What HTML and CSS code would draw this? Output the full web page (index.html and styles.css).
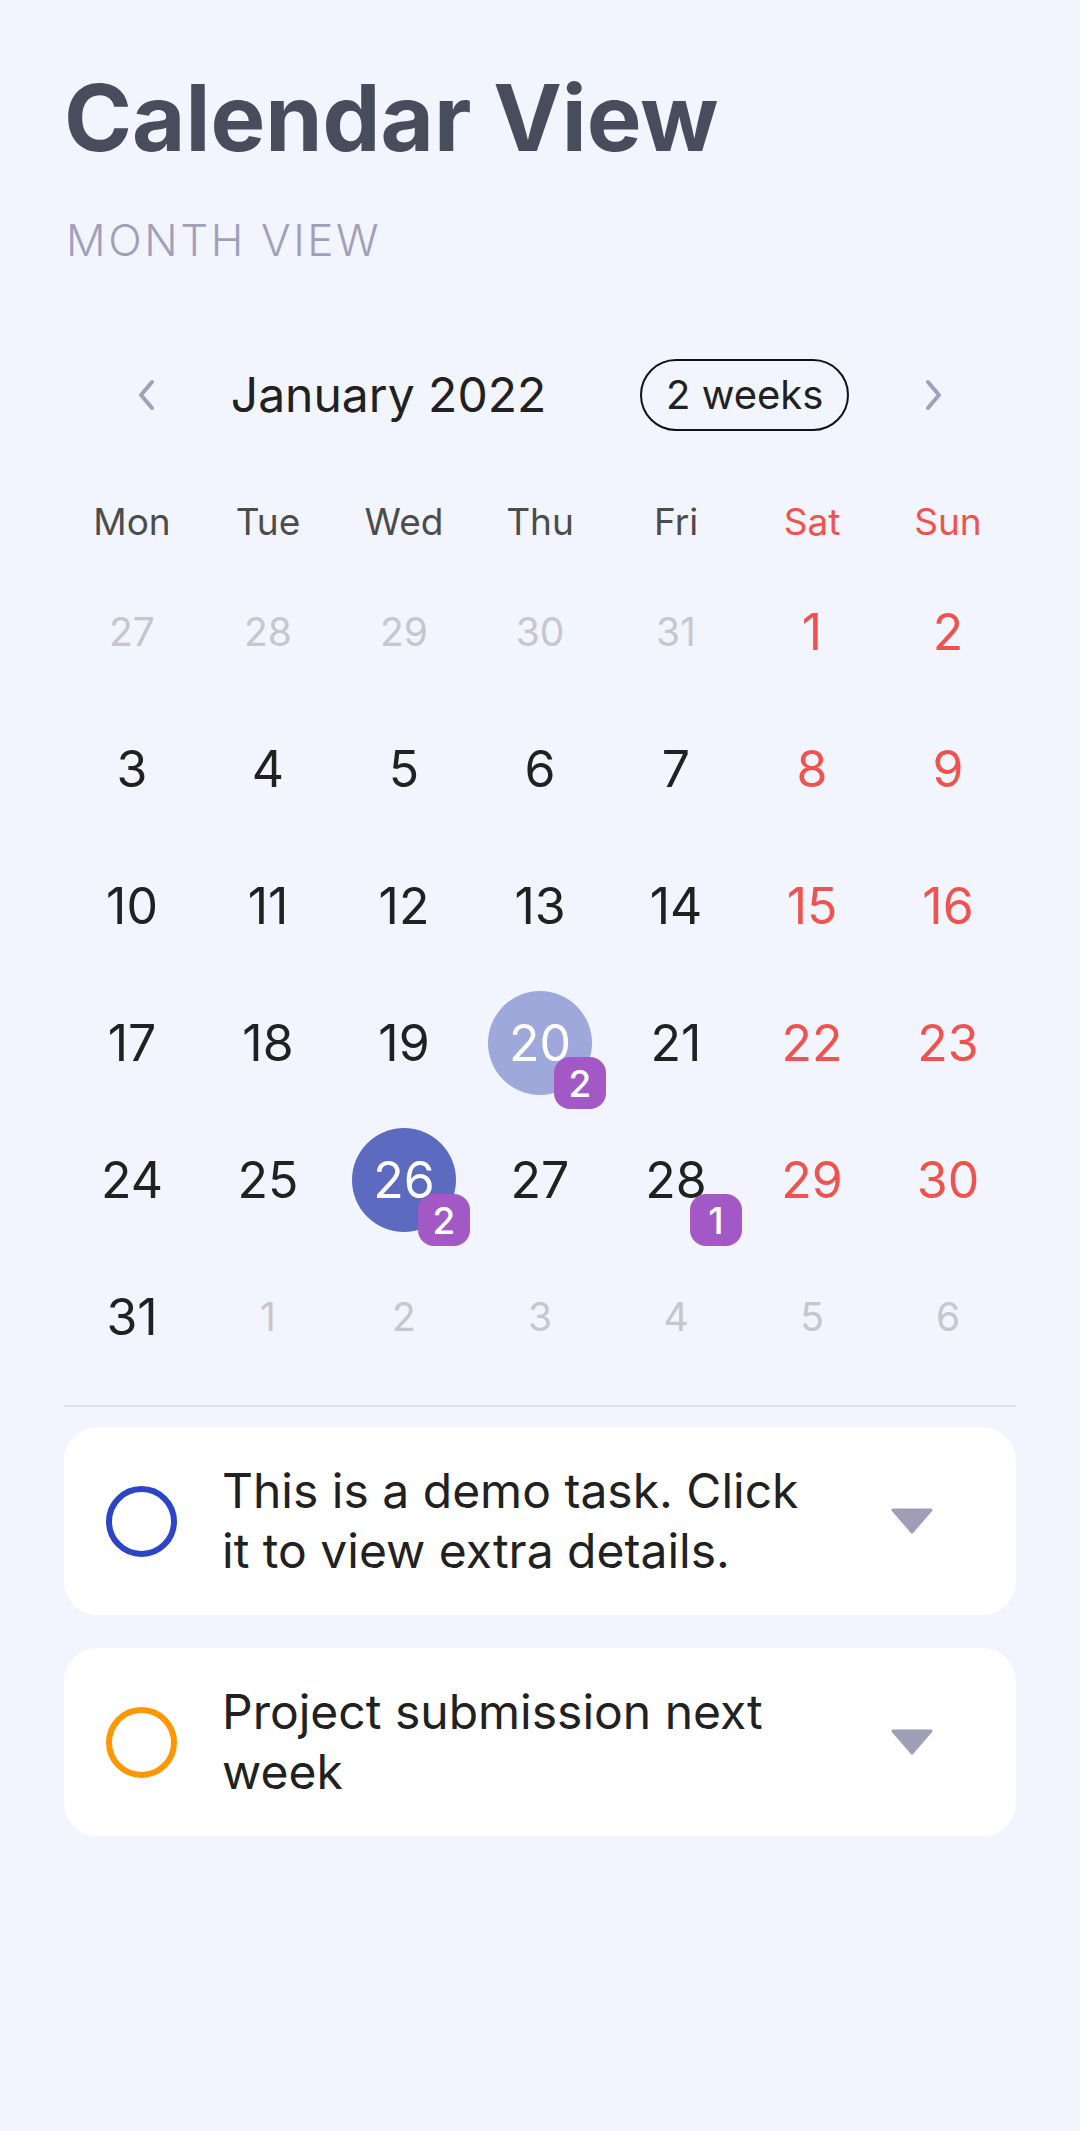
FILE: index.html
```html
<!DOCTYPE html>
<html lang="en">
<head>
<meta charset="utf-8">
<title>Calendar View</title>
<link rel="stylesheet" href="styles.css">
</head>
<body>
<main class="page">
  <h1 class="title">Calendar View</h1>
  <p class="subtitle">MONTH VIEW</p>

  <section class="calendar">
    <div class="cal-nav">
      <button class="chev" aria-label="Previous month">
        <svg width="24" height="34" viewBox="0 0 24 34"><path d="M18 4 L7 17 L18 30" fill="none" stroke="#a19fba" stroke-width="4" stroke-linecap="round" stroke-linejoin="round"/></svg>
      </button>
      <div class="cal-center">
        <span class="month">January 2022</span>
        <span class="pill">2 weeks</span>
      </div>
      <button class="chev" aria-label="Next month">
        <svg width="24" height="34" viewBox="0 0 24 34"><path d="M6 4 L17 17 L6 30" fill="none" stroke="#a19fba" stroke-width="4" stroke-linecap="round" stroke-linejoin="round"/></svg>
      </button>
    </div>

    <div class="weekdays">
      <span>Mon</span><span>Tue</span><span>Wed</span><span>Thu</span><span>Fri</span><span class="wkend">Sat</span><span class="wkend">Sun</span>
    </div>

    <div class="days">
      <div class="cell other">27</div>
      <div class="cell other">28</div>
      <div class="cell other">29</div>
      <div class="cell other">30</div>
      <div class="cell other">31</div>
      <div class="cell wkend">1</div>
      <div class="cell wkend">2</div>

      <div class="cell">3</div>
      <div class="cell">4</div>
      <div class="cell">5</div>
      <div class="cell">6</div>
      <div class="cell">7</div>
      <div class="cell wkend">8</div>
      <div class="cell wkend">9</div>

      <div class="cell">10</div>
      <div class="cell">11</div>
      <div class="cell">12</div>
      <div class="cell">13</div>
      <div class="cell">14</div>
      <div class="cell wkend">15</div>
      <div class="cell wkend">16</div>

      <div class="cell">17</div>
      <div class="cell">18</div>
      <div class="cell">19</div>
      <div class="cell"><span class="dot dot-light">20</span><span class="badge">2</span></div>
      <div class="cell">21</div>
      <div class="cell wkend">22</div>
      <div class="cell wkend">23</div>

      <div class="cell">24</div>
      <div class="cell">25</div>
      <div class="cell"><span class="dot dot-today">26</span><span class="badge">2</span></div>
      <div class="cell">27</div>
      <div class="cell">28<span class="badge">1</span></div>
      <div class="cell wkend">29</div>
      <div class="cell wkend">30</div>

      <div class="cell">31</div>
      <div class="cell other">1</div>
      <div class="cell other">2</div>
      <div class="cell other">3</div>
      <div class="cell other">4</div>
      <div class="cell other">5</div>
      <div class="cell other">6</div>
    </div>
  </section>

  <hr class="divider">

  <ul class="tasks">
    <li class="task">
      <span class="ring ring-blue"></span>
      <span class="task-text">This is a demo task. Click it to view extra details.</span>
      <svg class="caret" width="44" height="26" viewBox="0 0 44 26"><path d="M3 2 H41 L22 24 Z" fill="#a09db6" stroke="#a09db6" stroke-width="3" stroke-linejoin="round"/></svg>
    </li>
    <li class="task">
      <span class="ring ring-orange"></span>
      <span class="task-text">Project submission next week</span>
      <svg class="caret" width="44" height="26" viewBox="0 0 44 26"><path d="M3 2 H41 L22 24 Z" fill="#a09db6" stroke="#a09db6" stroke-width="3" stroke-linejoin="round"/></svg>
    </li>
  </ul>
</main>
</body>
</html>
```

FILE: styles.css
```css
* { box-sizing: border-box; }

html, body {
  margin: 0;
  padding: 0;
  background: #f2f5fd;
}

body {
  font-family: "Inter", "Roboto", "Noto Sans", sans-serif;
  color: #212121;
}

.page {
  padding: 72px 64px 0 64px;
}

.title {
  margin: 0;
  font-size: 92px;
  line-height: 1;
  font-weight: 700;
  color: #494c5c;
  letter-spacing: 0;
}

.subtitle {
  margin: 54px 0 0 2px;
  font-size: 44px;
  line-height: 1;
  font-weight: 300;
  letter-spacing: 2.6px;
  color: #a19fba;
}

.calendar {
  margin-top: 97px;
}

.cal-nav {
  height: 72px;
  display: flex;
  align-items: center;
  justify-content: space-between;
  padding: 0 60px;
}

.chev {
  width: 44px;
  height: 44px;
  border: 0;
  padding: 0;
  background: none;
  display: flex;
  align-items: center;
  justify-content: center;
}

.cal-center {
  display: flex;
  align-items: center;
  gap: 94px;
}

.month {
  font-size: 48px;
  line-height: 1;
  color: #212121;
}

.pill {
  height: 72px;
  width: 209px;
  border: 2.5px solid #111;
  border-radius: 36px;
  display: flex;
  align-items: center;
  justify-content: center;
  font-size: 40px;
  line-height: 1;
  color: #212121;
}

.weekdays {
  margin-top: 49px;
  height: 83px;
  display: grid;
  grid-template-columns: repeat(7, 1fr);
  align-items: center;
  justify-items: center;
  font-size: 37px;
  color: #4c4c4c;
}

.weekdays .wkend { color: #ef5350; }

.days {
  display: grid;
  grid-template-columns: repeat(7, 1fr);
  grid-auto-rows: 137px;
}

.cell {
  position: relative;
  display: flex;
  align-items: center;
  justify-content: center;
  font-size: 50px;
  line-height: 1;
  color: #212121;
}

.cell.wkend { color: #ef5350; }

.cell.other {
  font-size: 39px;
  color: #c6c6cc;
}

.dot {
  width: 104px;
  height: 104px;
  border-radius: 50%;
  display: flex;
  align-items: center;
  justify-content: center;
  color: #ffffff;
}

.dot-light { background: #9fa8da; }
.dot-today { background: #5c6bc0; }

.badge {
  position: absolute;
  right: 2px;
  bottom: 2px;
  width: 52px;
  height: 52px;
  border-radius: 16px;
  background: #a259c6;
  color: #ffffff;
  font-size: 37px;
  font-weight: 500;
  display: flex;
  align-items: center;
  justify-content: center;
}

.divider {
  margin: 20px 0 0 0;
  border: 0;
  height: 2px;
  background: #dcdfe7;
}

.tasks {
  list-style: none;
  margin: 20px 0 0 0;
  padding: 0;
  display: flex;
  flex-direction: column;
  gap: 33px;
}

.task {
  height: 188px;
  background: #ffffff;
  border-radius: 34px;
  display: flex;
  align-items: center;
  padding: 0 82px 0 42px;
}

.ring {
  flex: none;
  width: 71px;
  height: 71px;
  border-radius: 50%;
  border: 6px solid;
}

.ring-blue { border-color: #2c45c6; }
.ring-orange { border-color: #ff9800; }

.task-text {
  flex: none;
  width: 600px;
  margin-left: 45px;
  margin-right: auto;
  font-size: 48px;
  line-height: 60px;
  color: #212121;
}

.caret { flex: none; }
```
